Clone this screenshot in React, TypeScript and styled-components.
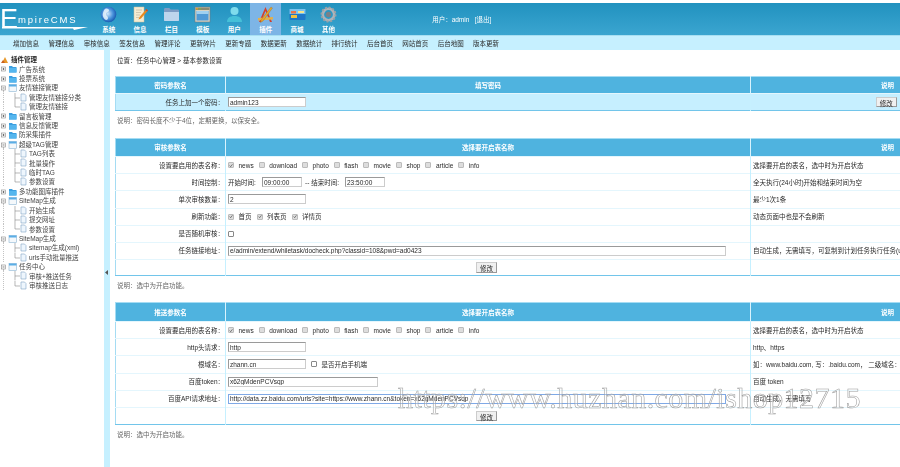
import React from 'react';
import styled, { createGlobalStyle } from 'styled-components';

const GlobalStyle = createGlobalStyle`
    html, body {
        margin: 0;
        padding: 0;
        background: #fff;
        overflow: hidden;
    }
    * {
        box-sizing: border-box;
    }
`;

const FONT = '"Liberation Sans", "Noto Sans CJK SC", sans-serif';

const Page = styled.div`
    position: relative;
    width: 900px;
    height: 467px;
    overflow: hidden;
    font-family: ${FONT};
    font-size: 6.5px;
    line-height: 9px;
    color: #2a2a2a;
`;

const Content = styled.div`
    height: 467px;
    padding-top: 3px;
    filter: blur(0.25px);
`;

const Header = styled.div`
    display: flex;
    height: 32px;
    background: linear-gradient(#2192bf, #3ba5d0);
`;

const Logo = styled.div`
    position: relative;
    width: 93px;
    flex: none;
    color: #fff;
`;

const LogoE = styled.span`
    position: absolute;
    left: 0;
    top: 3px;
    font-size: 27px;
    line-height: 27px;
`;

const LogoText = styled.span`
    position: absolute;
    left: 18px;
    top: 12px;
    font-size: 9.5px;
    line-height: 10px;
    letter-spacing: 1.8px;
`;

const LogoArrow = styled.svg`
    position: absolute;
    left: 2px;
    top: 20px;
`;

const NavItem = styled.div<{ $active?: boolean }>`
    width: 31.4px;
    flex: none;
    display: flex;
    flex-direction: column;
    align-items: center;
    padding-top: 3px;
    background: ${props => props.$active ? '#7db5e6' : 'transparent'};
`;

const NavLabel = styled.span`
    margin-top: 2px;
    color: #fff;
    font-weight: bold;
`;

const UserInfo = styled.div`
    margin-left: 88px;
    align-self: center;
    color: #fff;
    white-space: pre;
`;

const SubNav = styled.div`
    display: flex;
    height: 15px;
    padding-left: 13px;
    gap: 9.75px;
    align-items: center;
    background: #c6f0ff;
    border-top: 1px solid #a8dff2;
`;

const SubNavItem = styled.span`
    width: 25.65px;
    flex: none;
    white-space: nowrap;
`;

const Body = styled.div`
    display: flex;
    height: 417px;
`;

const Sidebar = styled.div`
    width: 104px;
    flex: none;
    padding-top: 5px;
`;

const TreeRow = styled.div`
    display: flex;
    align-items: center;
    height: 9.42px;
    white-space: nowrap;
`;

const TreeLabel = styled.span<{ $strong?: boolean }>`
    margin-left: 1px;
    font-weight: ${props => props.$strong ? 'bold' : 'normal'};
    color: ${props => props.$strong ? '#222' : '#444'};
`;

const Splitter = styled.div`
    width: 6px;
    flex: none;
    display: flex;
    align-items: center;
    justify-content: center;
    padding-top: 27px;
    padding-right: 1px;
    background: #c6f0ff;
`;

const Main = styled.div`
    flex: 1;
    min-width: 0;
    overflow: hidden;
    padding: 6px 0 0 5px;
`;

const Crumb = styled.div`
    height: 9px;
    margin: 0 0 11px 2px;
    white-space: pre;
`;

const Table = styled.table`
    width: 909px;
    table-layout: fixed;
    border-collapse: collapse;
    border-left: 1px solid #a5dcf3;
    border-top: 1px solid #a5dcf3;
    border-bottom: 1px solid #72c5ea;
`;

const HeadCell = styled.th<{ $h?: number }>`
    height: ${props => props.$h || 17}px;
    padding: 0;
    background: #4fb3df;
    color: #fff;
    font-weight: bold;
    text-align: center;
    border-right: 1px solid #d9f3fd;
`;

const Row = styled.tr<{ $tinted?: boolean; $short?: boolean }>`
    height: ${props => props.$short ? 16.15 : 17.15}px;
    background: ${props => props.$tinted ? '#c6efff' : '#fff'};
    border-top: 1px solid #e4f6fd;
`;

const LabelCell = styled.td`
    padding: 0 1px 0 0;
    text-align: right;
    white-space: nowrap;
    border-right: 1px solid #c6f0ff;
`;

const ValueCell = styled.td<{ $centered?: boolean }>`
    padding: ${props => props.$centered ? '0 3px 0 0' : '0 0 0 2px'};
    text-align: ${props => props.$centered ? 'center' : 'left'};
    white-space: nowrap;
    border-right: 1px solid #c6f0ff;
`;

const HelpCell = styled.td<{ $centered?: boolean }>`
    padding: ${props => props.$centered ? '0 3px 0 0' : '0 0 0 2px'};
    text-align: ${props => props.$centered ? 'center' : 'left'};
    white-space: nowrap;
`;

const Inline = styled.div<{ $gap?: number }>`
    display: flex;
    align-items: center;
    gap: ${props => props.$gap || 0}px;
`;

const TimeLabel = styled.span<{ $w: number }>`
    width: ${props => props.$w}px;
    flex: none;
`;

const Field = styled.input<{ $w: number; $focused?: boolean }>`
    display: block;
    width: ${props => props.$w}px;
    height: 10px;
    padding: 0 0 0 1px;
    margin: 0;
    font: 6.5px ${FONT};
    color: #2a2a2a;
    background: #fff;
    outline: none;
    border: 1px solid ${props => props.$focused ? '#7fa9e6' : '#ccc'};
    border-top-color: ${props => props.$focused ? '#7fa9e6' : '#9a9a9a'};
    border-left-color: ${props => props.$focused ? '#7fa9e6' : '#9a9a9a'};
`;

const Box = styled.span<{ $blank?: boolean }>`
    display: flex;
    align-items: center;
    justify-content: center;
    width: 6px;
    height: 6px;
    flex: none;
    background: ${props => props.$blank ? '#fff' : '#ddd'};
    border: 1px solid ${props => props.$blank ? '#888' : '#bbb'};
    border-radius: 1px;
`;

const CheckItem = styled.span`
    display: flex;
    align-items: center;
    gap: 4.5px;
    margin: 0 5px 0 0;
`;

const SaveButton = styled.button`
    height: 10.5px;
    width: 21px;
    padding: 0;
    font: 6.5px ${FONT};
    color: #2a2a2a;
    background: #f0f0f0;
    border: 1px solid #ccc;
    border-right-color: #999;
    border-bottom-color: #999;
    vertical-align: middle;
`;

const Note = styled.div<{ $after: number }>`
    height: 9px;
    margin: 5px 0 ${props => props.$after}px 2px;
    color: #666;
`;

const Watermark = styled.div`
    position: absolute;
    left: 398px;
    top: 381px;
    font-family: "Liberation Serif", serif;
    font-size: 30px;
    line-height: 34px;
    letter-spacing: 0.45px;
    white-space: nowrap;
    color: rgba(255, 255, 255, 0.25);
    -webkit-text-stroke: 0.55px #9c9c9c;
    pointer-events: none;
`;

const Globe = () => (
    <svg width="17" height="17" viewBox="0 0 17 17">
        <defs>
            <radialGradient id="gl" cx="0.45" cy="0.45" r="0.6">
                <stop offset="0" stopColor="#cfe6fa" />
                <stop offset="0.55" stopColor="#4a93dc" />
                <stop offset="1" stopColor="#0f4fa8" />
            </radialGradient>
        </defs>
        <circle cx="8.5" cy="8.5" r="7.8" fill="url(#gl)" />
        <path d="M5 3c2-1 4 0 4 1.500S6 6 6 8s2 2 2 4-2 2.500-3 1.500S2 10 3 7s1-3 2-4z" fill="#e8f3fc" opacity=".85" />
    </svg>
);

const NoteIcon = () => (
    <svg width="17" height="17" viewBox="0 0 17 17">
        <path d="M2 1h10v15H2z" fill="#f4ecd2" stroke="#c9bd9b" strokeWidth=".5" />
        <path d="M4 4h6M4 6.500h5M4 9h4M4 11.500h3" stroke="#b8b09a" strokeWidth=".6" />
        <path d="M14.500 3l1.500 1.500-7 8-2.500 1 1-2.500z" fill="#e98a1f" />
        <path d="M14.500 3l1.500 1.500-1 1-1.500-1.500z" fill="#c8402a" />
    </svg>
);

const FolderIcon = () => (
    <svg width="17" height="17" viewBox="0 0 17 17">
        <path d="M1 3.500C1 2.700 1.500 2 2.300 2h4l1.500 1.500h7c.8 0 1.200.6 1.200 1.300V14c0 .6-.5 1-1.200 1H2.200C1.500 15 1 14.600 1 14z" fill="#7d9cc4" />
        <path d="M1 6h15v8c0 .6-.5 1-1.200 1H2.200C1.500 15 1 14.600 1 14z" fill="#bed5ec" />
    </svg>
);

const WindowIcon = () => (
    <svg width="17" height="17" viewBox="0 0 17 17">
        <rect x="1" y="1" width="15" height="15" fill="#d8d4c4" stroke="#6f7a82" strokeWidth=".6" />
        <rect x="1.500" y="1.500" width="14" height="2.500" fill="#8a8a70" />
        <rect x="2" y="2" width="2" height="1.400" fill="#d9a02a" />
        <rect x="5" y="2" width="2" height="1.400" fill="#7bb04a" />
        <rect x="2.500" y="5" width="12" height="9.500" fill="#4f9ad6" />
        <rect x="2.500" y="5" width="12" height="3" fill="#9fd0f0" />
    </svg>
);

const UserIcon = () => (
    <svg width="17" height="17" viewBox="0 0 17 17">
        <circle cx="8.500" cy="5" r="4" fill="#7fdcec" />
        <path d="M1 16c0-4 3-6 7.500-6S16 12 16 16z" fill="#45c0d8" />
    </svg>
);

const ToolsIcon = () => (
    <svg width="17" height="17" viewBox="0 0 17 17">
        <path d="M8.500 1L2 16h2l4.500-11L13 16h2z" fill="#d33f2c" />
        <path d="M1 12l15-1v2.500L1 14.500z" fill="#e3b04a" />
        <path d="M14 1l1.500 1L6 15l-2.500 1.500L4 14z" fill="#e8a62a" stroke="#8a5a18" strokeWidth=".3" />
    </svg>
);

const CardIcon = () => (
    <svg width="17" height="17" viewBox="0 0 17 17">
        <rect x="0.500" y="3" width="16" height="11" rx="1" fill="#1e78c8" />
        <rect x="0.500" y="3" width="16" height="5" fill="#7cc4ee" />
        <rect x="2" y="9" width="6" height="3" fill="#f0c040" />
        <rect x="9" y="5" width="6" height="2" fill="#f6e58c" />
        <rect x="2" y="5" width="5" height="2.500" fill="#e8744a" />
    </svg>
);

const GearIcon = () => (
    <svg width="17" height="17" viewBox="0 0 17 17">
        <circle cx="8.500" cy="8.500" r="5.700" fill="none" stroke="#aeb4ba" strokeWidth="2.600" />
        <circle cx="8.500" cy="8.500" r="7" fill="none" stroke="#9aa0a6" strokeWidth="2" strokeDasharray="2 1.660" />
        <circle cx="8.500" cy="8.500" r="2.700" fill="#7a8189" />
    </svg>
);

const NAV: [React.ReactNode, string][] = [
    [<Globe />, '系统'],
    [<NoteIcon />, '信息'],
    [<FolderIcon />, '栏目'],
    [<WindowIcon />, '模板'],
    [<UserIcon />, '用户'],
    [<ToolsIcon />, '插件'],
    [<CardIcon />, '商城'],
    [<GearIcon />, '其他'],
];

const SUBNAV = ['增加信息', '管理信息', '审核信息', '签发信息', '管理评论', '更新碎片', '更新专题', '数据更新', '数据统计', '排行统计', '后台首页', '网站首页', '后台地图', '版本更新'];

type TreeKind = 'root' | 'closed' | 'open' | 'leaf' | 'last';

const TREE: [TreeKind, string][] = [
    ['root', '插件管理'],
    ['closed', '广告系统'],
    ['closed', '投票系统'],
    ['open', '友情链接管理'],
    ['leaf', '管理友情链接分类'],
    ['last', '管理友情链接'],
    ['closed', '留言板管理'],
    ['closed', '信息反馈管理'],
    ['closed', '防采集插件'],
    ['open', '超级TAG管理'],
    ['leaf', 'TAG列表'],
    ['leaf', '批量操作'],
    ['leaf', '临时TAG'],
    ['last', '参数设置'],
    ['closed', '多功能图库插件'],
    ['open', 'SiteMap生成'],
    ['leaf', '开始生成'],
    ['leaf', '提交网址'],
    ['last', '参数设置'],
    ['open', 'SiteMap生成'],
    ['leaf', 'sitemap生成(xml)'],
    ['last', 'urls手动批量推送'],
    ['open', '任务中心'],
    ['leaf', '审核+推送任务'],
    ['last', '审核推送日志'],
];

const TreeGlyph = ({ kind }: { kind: TreeKind }) => {
    if (kind === 'root') {
        return (
            <svg width="10" height="9.420" viewBox="0 0 10 9.420">
                <path d="M2 8l3-6 3 6z" fill="#e8982a" />
                <path d="M1 8l2-3 2 3z" fill="#c9601c" />
            </svg>
        );
    }
    if (kind === 'leaf' || kind === 'last') {
        return (
            <svg width="28" height="9.420" viewBox="0 0 28 9.420">
                <path d="M3.500 0v9.420" stroke="#999" strokeWidth=".6" strokeDasharray="1 1" />
                <path d={kind === 'last' ? 'M15 0v5h5' : 'M15 0v9.420M15 5h5'} stroke="#888" strokeWidth=".6" fill="none" />
                <path d="M21 1h3.500L26 2.500V8h-5z" fill="#eef6fd" stroke="#7fa3c4" strokeWidth=".6" />
            </svg>
        );
    }
    return (
        <svg width="18" height="9.420" viewBox="0 0 18 9.420">
            {kind === 'open' && <path d="M3.500 6v3.420" stroke="#999" strokeWidth=".6" />}
            <rect x="1.500" y="3" width="4" height="4" fill="#fff" stroke="#888" strokeWidth=".6" />
            <path d="M2.500 5h2" stroke="#333" strokeWidth=".6" />
            {kind === 'closed' && <path d="M3.500 4v2" stroke="#333" strokeWidth=".6" />}
            {kind === 'closed' ? (
                <>
                    <path d="M9 2h3l1 1h3.500v5.500H9z" fill="#3c9fe0" />
                    <path d="M9 4h7.500v4.500H9z" fill="#55b6ee" />
                </>
            ) : (
                <>
                    <rect x="9" y="1.500" width="7.500" height="7" fill="#f4f8fb" stroke="#8ab4d4" strokeWidth=".6" />
                    <rect x="9" y="1.500" width="7.500" height="2" fill="#5aaee6" />
                </>
            )}
        </svg>
    );
};

const CheckMark = () => (
    <svg width="5" height="5" viewBox="0 0 5 5">
        <path d="M.8 2.500l1.300 1.500L4.300 1" fill="none" stroke="#444" strokeWidth=".8" />
    </svg>
);

const Check = ({ label, checked, blank }: { label?: string; checked?: boolean; blank?: boolean }) => (
    <CheckItem>
        <Box $blank={blank}>{checked && <CheckMark />}</Box>
        {label && <span>{label}</span>}
    </CheckItem>
);

const TableNames = () => (
    <Inline>
        <Check label="news" checked />
        <Check label="download" />
        <Check label="photo" />
        <Check label="flash" />
        <Check label="movie" />
        <Check label="shop" />
        <Check label="article" />
        <Check label="info" />
    </Inline>
);

const Columns = () => (
    <colgroup>
        <col width="110" />
        <col width="525" />
        <col width="274" />
    </colgroup>
);

const Value = ({ value, w, focused }: { value: string; w: number; focused?: boolean }) => (
    <Field $w={w} $focused={focused} defaultValue={value} readOnly />
);

const App = () => {
    return (
        <Page>
            <GlobalStyle />
            <Content>
                <Header>
                    <Logo>
                        <LogoE>E</LogoE>
                        <LogoText>mpireCMS</LogoText>
                        <LogoArrow width="88" height="10" viewBox="0 0 88 10">
                            <path d="M0 4h70l16 0-14 3-1-1.500H0z" fill="#fff" />
                        </LogoArrow>
                    </Logo>
                    {NAV.map(([icon, label], i) => (
                        <NavItem key={label} $active={i === 5}>
                            {icon}
                            <NavLabel>{label}</NavLabel>
                        </NavItem>
                    ))}
                    <UserInfo>用户：admin   [退出]</UserInfo>
                </Header>
                <SubNav>
                    {SUBNAV.map(item => <SubNavItem key={item}>{item}</SubNavItem>)}
                </SubNav>
                <Body>
                    <Sidebar>
                        {TREE.map(([kind, label], i) => (
                            <TreeRow key={i}>
                                <TreeGlyph kind={kind} />
                                <TreeLabel $strong={kind === 'root'}>{label}</TreeLabel>
                            </TreeRow>
                        ))}
                    </Sidebar>
                    <Splitter>
                        <svg width="3" height="5" viewBox="0 0 3 5">
                            <path d="M3 0v5L0 2.500z" fill="#555" />
                        </svg>
                    </Splitter>
                    <Main>
                        <Crumb>位置：任务中心管理 &gt; 基本参数设置</Crumb>

                        <Table>
                            <Columns />
                            <thead>
                                <tr>
                                    <HeadCell>密码参数名</HeadCell>
                                    <HeadCell>填写密码</HeadCell>
                                    <HeadCell>说明</HeadCell>
                                </tr>
                            </thead>
                            <tbody>
                                <Row $tinted>
                                    <LabelCell>任务上加一个密码：</LabelCell>
                                    <ValueCell><Value value="admin123" w={78} /></ValueCell>
                                    <HelpCell $centered><SaveButton>修改</SaveButton></HelpCell>
                                </Row>
                            </tbody>
                        </Table>
                        <Note $after={13}>说明：密码长度不少于4位，定期更换，以保安全。</Note>

                        <Table>
                            <Columns />
                            <thead>
                                <tr>
                                    <HeadCell $h={18}>审核参数名</HeadCell>
                                    <HeadCell $h={18}>选择要开启表名称</HeadCell>
                                    <HeadCell $h={18}>说明</HeadCell>
                                </tr>
                            </thead>
                            <tbody>
                                <Row>
                                    <LabelCell>设置要启用的表名称：</LabelCell>
                                    <ValueCell><TableNames /></ValueCell>
                                    <HelpCell>选择要开启的表名，选中时为开启状态</HelpCell>
                                </Row>
                                <Row>
                                    <LabelCell>时间控制：</LabelCell>
                                    <ValueCell>
                                        <Inline $gap={3}>
                                            <TimeLabel $w={31}>开始时间:</TimeLabel>
                                            <Value value="09:00:00" w={40} />
                                            <TimeLabel $w={37}>-- 结束时间:</TimeLabel>
                                            <Value value="23:50:00" w={40} />
                                        </Inline>
                                    </ValueCell>
                                    <HelpCell>全天执行(24小时)开始和结束时间为空</HelpCell>
                                </Row>
                                <Row>
                                    <LabelCell>单次审核数量：</LabelCell>
                                    <ValueCell><Value value="2" w={78} /></ValueCell>
                                    <HelpCell>最少1次1条</HelpCell>
                                </Row>
                                <Row>
                                    <LabelCell>刷新功能：</LabelCell>
                                    <ValueCell>
                                        <Inline>
                                            <Check label="首页" checked />
                                            <Check label="列表页" checked />
                                            <Check label="详情页" checked />
                                        </Inline>
                                    </ValueCell>
                                    <HelpCell>动态页面中也是不会刷新</HelpCell>
                                </Row>
                                <Row>
                                    <LabelCell>是否随机审核：</LabelCell>
                                    <ValueCell><Inline><Check blank /></Inline></ValueCell>
                                    <HelpCell />
                                </Row>
                                <Row>
                                    <LabelCell>任务链接地址：</LabelCell>
                                    <ValueCell><Value value="e/admin/extend/whiletask/docheck.php?classid=108&pwd=ad0423" w={498} /></ValueCell>
                                    <HelpCell>自动生成，无需填写，可复制到计划任务执行任务(url)</HelpCell>
                                </Row>
                                <Row $short>
                                    <LabelCell />
                                    <ValueCell $centered><SaveButton>修改</SaveButton></ValueCell>
                                    <HelpCell />
                                </Row>
                            </tbody>
                        </Table>
                        <Note $after={12}>说明：选中为开启功能。</Note>

                        <Table>
                            <Columns />
                            <thead>
                                <tr>
                                    <HeadCell $h={19}>推送参数名</HeadCell>
                                    <HeadCell $h={19}>选择要开启表名称</HeadCell>
                                    <HeadCell $h={19}>说明</HeadCell>
                                </tr>
                            </thead>
                            <tbody>
                                <Row>
                                    <LabelCell>设置要启用的表名称：</LabelCell>
                                    <ValueCell><TableNames /></ValueCell>
                                    <HelpCell>选择要开启的表名，选中时为开启状态</HelpCell>
                                </Row>
                                <Row>
                                    <LabelCell>http头请求：</LabelCell>
                                    <ValueCell><Value value="http" w={78} /></ValueCell>
                                    <HelpCell>http、https</HelpCell>
                                </Row>
                                <Row>
                                    <LabelCell>根域名：</LabelCell>
                                    <ValueCell>
                                        <Inline $gap={5}>
                                            <Value value="zhann.cn" w={78} />
                                            <Check label="是否开启手机端" blank />
                                        </Inline>
                                    </ValueCell>
                                    <HelpCell>如：www.baidu.com, 写：.baidu.com， 二级域名：</HelpCell>
                                </Row>
                                <Row>
                                    <LabelCell>百度token：</LabelCell>
                                    <ValueCell><Value value="x62gMdenPCVsqp" w={150} /></ValueCell>
                                    <HelpCell>百度 token</HelpCell>
                                </Row>
                                <Row>
                                    <LabelCell>百度API请求地址：</LabelCell>
                                    <ValueCell><Value value="http://data.zz.baidu.com/urls?site=https://www.zhann.cn&token=x62gMdenPCVsqp" w={498} focused /></ValueCell>
                                    <HelpCell>自动生成，无需填写</HelpCell>
                                </Row>
                                <Row>
                                    <LabelCell />
                                    <ValueCell $centered><SaveButton>修改</SaveButton></ValueCell>
                                    <HelpCell />
                                </Row>
                            </tbody>
                        </Table>
                        <Note $after={0}>说明：选中为开启功能。</Note>
                    </Main>
                </Body>
            </Content>
            <Watermark>https://www.huzhan.com/ishop12715</Watermark>
        </Page>
    );
};

export default App;
